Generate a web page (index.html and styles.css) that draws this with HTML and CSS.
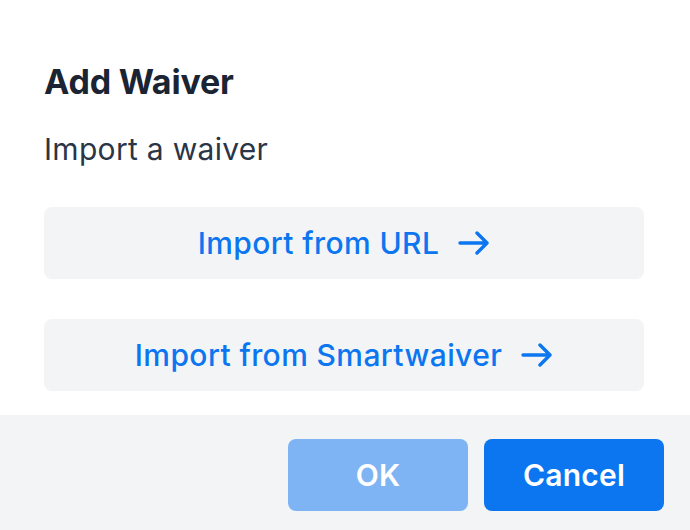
FILE: index.html
```html
<!DOCTYPE html>
<html>
<head>
<meta charset="utf-8">
<link rel="stylesheet" href="styles.css">
</head>
<body>
<div class="modal">
  <div class="body">
    <h2 class="title">Add Waiver</h2>
    <p class="subtitle">Import a waiver</p>
    <div class="options">
      <button class="option">Import from URL <svg class="arrow" viewBox="0 0 32 24" width="32" height="24"><path d="M2 12H29M19 2L29 12L19 22" fill="none" stroke="currentColor" stroke-width="3.4" stroke-linecap="round" stroke-linejoin="round"/></svg></button>
      <button class="option">Import from Smartwaiver <svg class="arrow" viewBox="0 0 32 24" width="32" height="24"><path d="M2 12H29M19 2L29 12L19 22" fill="none" stroke="currentColor" stroke-width="3.4" stroke-linecap="round" stroke-linejoin="round"/></svg></button>
    </div>
  </div>
  <div class="footer">
    <button class="btn btn-ok">OK</button>
    <button class="btn btn-cancel">Cancel</button>
  </div>
</div>
</body>
</html>
```
FILE: styles.css
```css
html, body {
  margin: 0;
  padding: 0;
  background: #ffffff;
}
body {
  font-family: Inter, "Noto Sans", sans-serif;
  width: 690px;
  height: 530px;
  overflow: hidden;
}
.modal {
  display: flex;
  flex-direction: column;
  height: 530px;
}
.body {
  padding: 58px 46px 0 44px;
  flex: 1;
}
.title {
  margin: 0;
  font-size: 34px;
  line-height: 48px;
  font-weight: 700;
  color: #1a2433;
  letter-spacing: -0.2px;
}
.subtitle {
  margin: 23px 0 0 0;
  font-size: 30px;
  line-height: 40px;
  color: #2a3547;
  font-weight: 400;
  letter-spacing: 0.3px;
}
.options {
  margin-top: 38px;
  display: flex;
  flex-direction: column;
  gap: 40px;
}
.option {
  height: 72px;
  border: none;
  border-radius: 8px;
  background: #f3f4f6;
  color: #0b76ef;
  font-family: inherit;
  font-size: 30px;
  font-weight: 500;
  letter-spacing: 0.4px;
  display: flex;
  align-items: center;
  justify-content: center;
  gap: 19px;
  padding: 0;
}
.arrow {
  display: block;
}
.footer {
  height: 115px;
  background: #f3f4f6;
  display: flex;
  justify-content: flex-end;
  align-items: flex-start;
  gap: 16px;
  padding: 24px 26px 0 0;
  box-sizing: border-box;
}
.btn {
  width: 180px;
  height: 72px;
  border: none;
  border-radius: 8px;
  color: #ffffff;
  font-family: inherit;
  font-size: 30px;
  font-weight: 600;
  letter-spacing: 0.2px;
}
.btn-ok {
  background: #7fb4f4;
}
.btn-cancel {
  background: #0b76ef;
}
```
